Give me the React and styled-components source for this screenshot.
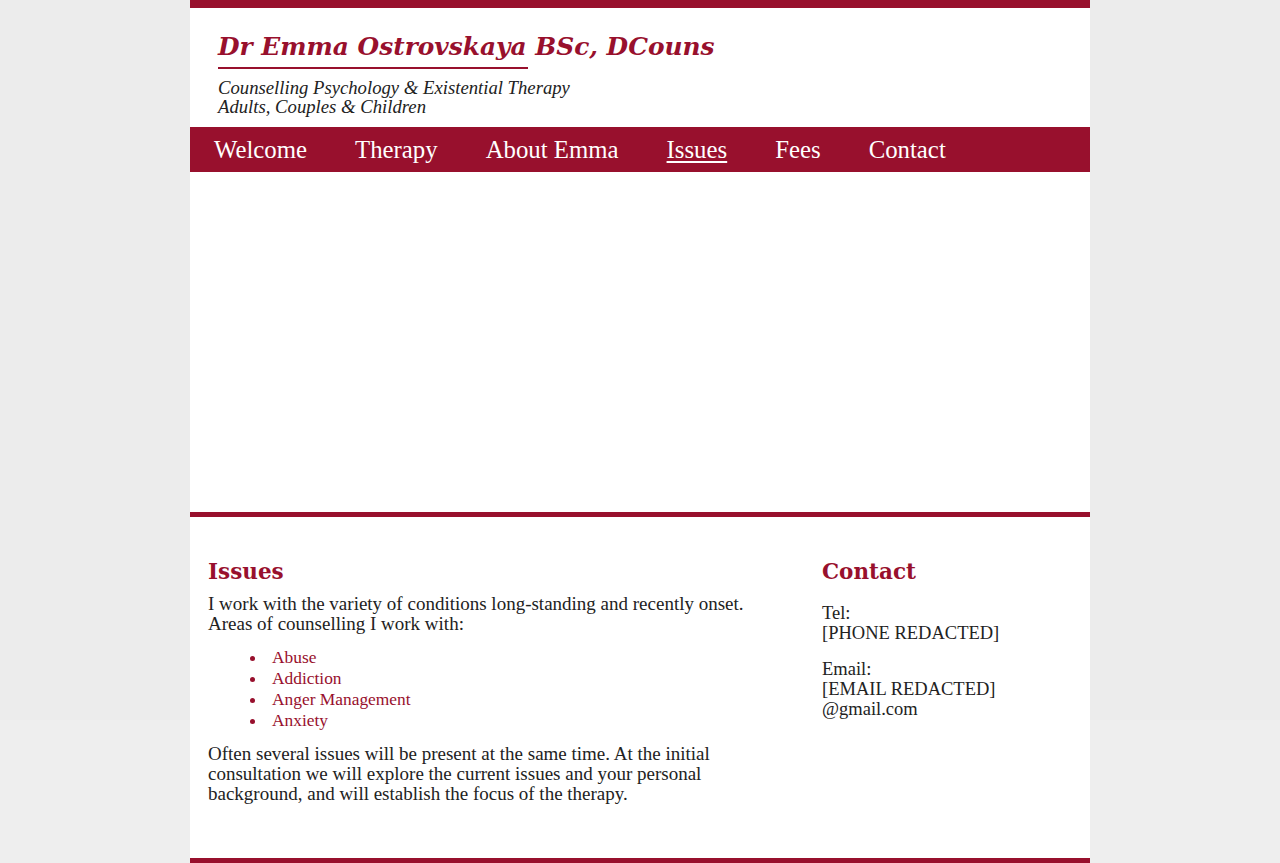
import React from "react";
import styled, { createGlobalStyle } from "styled-components";

const CRIMSON = "#98102d";
const TEXT = "#222222";

const Global = createGlobalStyle`
  html {
    background: linear-gradient(to bottom, #ececec 0, #ececec 720px, #eeeeee 720px, #eeeeee 100%);
    min-height: 100%;
  }
  body {
    margin: 0;
    background: transparent;
    font-family: "Liberation Serif", "Times New Roman", serif;
    color: ${TEXT};
  }
  * { box-sizing: border-box; }
`;

const Page = styled.div`
  width: 900px;
  margin: 0 auto;
  background: #ffffff;
  border-top: 8px solid ${CRIMSON};
  border-bottom: 5px solid ${CRIMSON};
`;

const Header = styled.header`
  padding: 24px 28px 11px;
`;

const Title = styled.h1`
  margin: 0;
  font-family: "DejaVu Serif", Georgia, serif;
  font-weight: bold;
  font-style: italic;
  font-size: 24.85px;
  line-height: 30px;
  color: ${CRIMSON};
`;

const Rule = styled.div`
  width: 310px;
  height: 2px;
  margin-top: 5px;
  background: ${CRIMSON};
`;

const Tagline = styled.p`
  margin: 9px 0 0;
  font-style: italic;
  font-size: 18.7px;
  line-height: 19px;
  color: ${TEXT};
`;

const Nav = styled.nav`
  background: ${CRIMSON};
  height: 45px;
`;

const NavList = styled.ul`
  display: flex;
  margin: 0;
  padding: 0;
  list-style: none;
`;

const NavItem = styled.li`
  padding: 0 24px;
  font-size: 24.8px;
  line-height: 45px;
  color: #ffffff;
  text-decoration: ${(p) => (p.$active ? "underline" : "none")};
  text-decoration-thickness: 2px;
  text-underline-offset: 3px;
  cursor: pointer;
`;

const Banner = styled.div`
  height: 340px;
  background: #ffffff;
`;

const Content = styled.main`
  display: grid;
  grid-template-columns: 560px 1fr;
  column-gap: 54px;
  padding: 42px 18px 54px;
  border-top: 5px solid ${CRIMSON};
`;

const Column = styled.section`
  min-width: 0;
`;

const Heading = styled.h2`
  margin: 0;
  font-family: "DejaVu Serif", Georgia, serif;
  font-weight: bold;
  font-size: 21.5px;
  line-height: 26px;
  color: ${CRIMSON};
`;

const Para = styled.p`
  margin: ${(p) => p.$top}px 0 0;
  font-size: ${(p) => p.$size || 19}px;
  line-height: 20px;
  color: ${TEXT};
`;

const IssueList = styled.ul`
  margin: 13px 0 0;
  padding-left: 64px;
  list-style: none;
`;

const IssueItem = styled.li`
  position: relative;
  font-size: 17.4px;
  line-height: 21px;
  color: ${CRIMSON};

  &::before {
    content: "";
    position: absolute;
    left: -22px;
    top: 8.5px;
    width: 5px;
    height: 5px;
    border-radius: 50%;
    background: ${CRIMSON};
  }
`;

const navItems = ["Welcome", "Therapy", "About Emma", "Issues", "Fees", "Contact"];
const issues = ["Abuse", "Addiction", "Anger Management", "Anxiety"];

export default function App() {
  return (
    <>
      <Global />
      <Page>
        <Header>
          <Title>Dr Emma Ostrovskaya BSc, DCouns</Title>
          <Rule />
          <Tagline>
            Counselling Psychology &amp; Existential Therapy
            <br />
            Adults, Couples &amp; Children
          </Tagline>
        </Header>
        <Nav>
          <NavList>
            {navItems.map((n) => (
              <NavItem key={n} $active={n === "Issues"}>
                {n}
              </NavItem>
            ))}
          </NavList>
        </Nav>
        <Banner />
        <Content>
          <Column>
            <Heading>Issues</Heading>
            <Para $top={9}>
              I work with the variety of conditions long-standing and recently onset. Areas of
              counselling I work with:
            </Para>
            <IssueList>
              {issues.map((i) => (
                <IssueItem key={i}>{i}</IssueItem>
              ))}
            </IssueList>
            <Para $top={13}>
              Often several issues will be present at the same time. At the initial consultation
              we will explore the current issues and your personal background, and will establish
              the focus of the therapy.
            </Para>
          </Column>
          <Column>
            <Heading>Contact</Heading>
            <Para $top={18} $size={18.5}>
              Tel:
              <br />
              [PHONE REDACTED]
            </Para>
            <Para $top={16} $size={18.5}>
              Email:
              <br />
              [EMAIL REDACTED]
              <br />
              @gmail.com
            </Para>
          </Column>
        </Content>
      </Page>
    </>
  );
}
